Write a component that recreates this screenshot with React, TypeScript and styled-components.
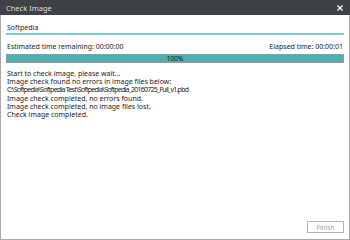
import React from 'react';
import styled, { createGlobalStyle } from 'styled-components';

const GlobalStyle = createGlobalStyle`
  html, body {
    margin: 0;
    padding: 0;
    background: #ffffff;
  }
  * {
    box-sizing: border-box;
  }
`;

const Window = styled.div`
  width: 350px;
  height: 240px;
  display: flex;
  flex-direction: column;
  background: #ffffff;
  border: 1px solid #a9a9a9;
  border-top: none;
  font-family: 'Noto Sans', 'Open Sans', sans-serif;
  color: #222;
  font-size: 7px;
`;

const TitleBar = styled.div`
  height: 15px;
  margin: 0 -1px;
  display: flex;
  align-items: center;
  justify-content: space-between;
  padding: 0 7px 0 6px;
  background: #3e4246;
  color: #dcdcdc;
  font-size: 7.5px;
`;

const CloseButton = styled.span`
  display: flex;
  align-items: center;
`;

const Body = styled.div`
  flex: 1;
  display: flex;
  flex-direction: column;
  padding: 8px 5px 6px 5px;
`;

const NameField = styled.div`
  display: flex;
  align-items: center;
  height: 12px;
  padding: 0 0 1px 1px;
  border-bottom: 2px solid #7ccdcf;
`;

const TimeRow = styled.div`
  display: flex;
  justify-content: space-between;
  margin-top: 7px;
  padding: 0 1px;
  line-height: 9px;
`;

const Progress = styled.div`
  margin-top: 3px;
  height: 9px;
  border: 1px solid #9a9a9a;
  background: #ffffff;
  position: relative;
`;

const ProgressFill = styled.div`
  height: 100%;
  background: #4cafb1;
`;

const ProgressLabel = styled.span`
  position: absolute;
  inset: 0;
  display: flex;
  align-items: center;
  justify-content: center;
  font-size: 6.5px;
  color: #1a1a1a;
`;

const Log = styled.div`
  margin-top: 7px;
  padding-left: 1px;
  line-height: 8.2px;
  flex: 1;
`;

const LogLine = styled.div<{ $tight?: boolean }>`
  white-space: nowrap;
  letter-spacing: ${p => (p.$tight ? '-0.75px' : 'normal')};
`;

const Footer = styled.div`
  display: flex;
  justify-content: flex-end;
`;

const FinishButton = styled.button`
  width: 37px;
  height: 12px;
  padding: 0;
  border: 1px solid #b5b5b5;
  background: #ffffff;
  color: #9a9a9a;
  font-family: inherit;
  font-size: 6.5px;
`;

const lines = [
  'Start to check image, please wait...',
  'Image check found no errors in image files below:',
  'C:\\Softpedia\\Softpedia Test\\Softpedia\\Softpedia_20160725_Full_v1.pbd',
  'Image check completed, no errors found.',
  'Image check completed, no image files lost.',
  'Check image completed.',
];

const App: React.FC = () => {
  const percent = 100;
  return (
    <>
      <GlobalStyle />
      <Window>
        <TitleBar>
          <span>Check Image</span>
          <CloseButton>
            <svg width="6" height="6" viewBox="0 0 6 6">
              <path d="M0.5 0.5 L5.5 5.5 M5.5 0.5 L0.5 5.5" stroke="#ffffff" strokeWidth="1.3" />
            </svg>
          </CloseButton>
        </TitleBar>
        <Body>
          <NameField>Softpedia</NameField>
          <TimeRow>
            <span>Estimated time remaining: 00:00:00</span>
            <span>Elapsed time: 00:00:01</span>
          </TimeRow>
          <Progress>
            <ProgressFill style={{ width: `${percent}%` }} />
            <ProgressLabel>{percent}%</ProgressLabel>
          </Progress>
          <Log>
            {lines.map((l, i) => (
              <LogLine key={i} $tight={l.startsWith('C:')}>{l}</LogLine>
            ))}
          </Log>
          <Footer>
            <FinishButton>Finish</FinishButton>
          </Footer>
        </Body>
      </Window>
    </>
  );
};

export default App;
